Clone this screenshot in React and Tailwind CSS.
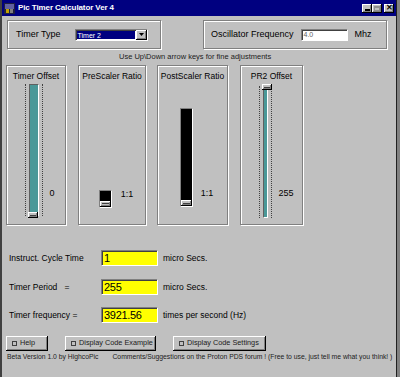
import React from 'react';

const etched = 'border border-[#808080] shadow-[inset_1px_1px_0_#fff,1px_1px_0_#fff]';
const sunken = 'border-t border-l border-[#808080] border-b border-r border-b-white border-r-white shadow-[inset_1px_1px_0_#404040]';
const raised = 'bg-[#c0c0c0] shadow-[inset_-1px_-1px_0_#000,inset_1px_1px_0_#fff,inset_-2px_-2px_0_#808080]';

const TitleButton = ({ children, dim }) => (
    <div className={`w-[10px] h-[9px] ${raised} flex items-center justify-center text-[8px] leading-none font-bold ${dim ? 'text-[#808080]' : 'text-black'}`}>
        {children}
    </div>
);

// vertical trackbar with dotted tick marks and a teal channel
const TealSlider = ({ trackW, thumbTop, height }) => (
    <div className="relative flex gap-[3px]" style={{ height }}>
        <div className="w-px h-full border-l border-dotted border-[#404040]" />
        <div className={`${trackW} h-full bg-[#4a9898] border border-[#606060] border-r-white border-b-white`} />
        <div className="w-px h-full border-l border-dotted border-[#404040]" />
        <div className={`absolute left-[3px] w-[10px] h-[6px] ${raised} flex items-center justify-center ${thumbTop ? 'top-[-2px]' : 'bottom-[-2px]'}`}>
            <div className="w-[6px] h-px bg-[#404040]" />
        </div>
    </div>
);

const BlackSlider = ({ height }) => (
    <div className="w-[13px] bg-black border border-[#808080] border-r-white border-b-white flex flex-col justify-end" style={{ height }}>
        <div className={`h-[6px] ${raised} flex items-center justify-center`}>
            <div className="w-[7px] h-px bg-[#404040]" />
        </div>
    </div>
);

const SliderGroup = ({ title, w, ml, children }) => (
    <div className={`${etched} ${w} ${ml} h-[160px] flex flex-col items-center`}>
        <div className="mt-[5px] text-[8.5px] leading-[10px] whitespace-nowrap">{title}</div>
        {children}
    </div>
);

const ResultRow = ({ label, value, unit, mt }) => (
    <div className={`flex items-center h-[16px] ${mt}`}>
        <div className="w-[92px] ml-[7px] text-[8.5px] whitespace-pre">{label}</div>
        <div className={`w-[57px] h-[16px] bg-[#ffff00] ${sunken} flex items-center pl-[2px] text-[11px] tracking-[-0.3px] leading-none`}>{value}</div>
        <div className="ml-[5px] text-[8.5px]">{unit}</div>
    </div>
);

const Button = ({ label, w, ml }) => (
    <div className={`${w} ${ml} h-[15px] ${raised} flex items-center pl-[6px] text-[7.3px] text-[#202020] whitespace-nowrap`}>
        <span className="w-[5px] h-[5px] border border-[#404040] mr-[3px] shrink-0" />
        {label}
    </div>
);

export default function App() {
    return (
        <div className="w-[400px] h-[377px] bg-[#808080] font-['Liberation_Sans',Arial,sans-serif] text-black overflow-hidden">
            <div className="w-[397px] h-[377px] bg-[#c0c0c0] border-l-2 border-[#404040] border-r border-r-[#202020] flex flex-col">

                {/* Title bar */}
                <div className="h-[16px] bg-[#000080] flex items-center pl-[2px] pr-[2px]">
                    <svg width="11" height="11" viewBox="0 0 11 11">
                        <rect x="0" y="0" width="11" height="11" fill="#202040" />
                        <rect x="1" y="1" width="9" height="5" fill="#6060a0" />
                        <rect x="2" y="6" width="3" height="4" fill="#c0a000" />
                        <rect x="6" y="6" width="3" height="4" fill="#808080" />
                    </svg>
                    <span className="ml-[3px] text-white font-bold text-[8px] tracking-[-0.1px]">Pic Timer Calculator Ver 4</span>
                    <div className="ml-auto flex items-center">
                        <TitleButton><span className="mt-[4px] block w-[5px] h-[1.5px] bg-black" /></TitleButton>
                        <TitleButton dim><span className="block w-[6px] h-[5px] border border-[#909090] border-t-2" /></TitleButton>
                        <div className="ml-[2px]"><TitleButton>✕</TitleButton></div>
                    </div>
                </div>

                {/* Timer type / oscillator */}
                <div className="flex mt-[4px]">
                    <div className={`${etched} ml-[5px] w-[154px] h-[29px] flex items-center`}>
                        <span className="ml-[8px] text-[9px]">Timer Type</span>
                        <div className={`ml-[14px] w-[73px] h-[12px] bg-white ${sunken} flex items-stretch`}>
                            <div className="flex-1 m-px bg-[#000080] text-white text-[7px] leading-[9px] pl-px">Timer 2</div>
                            <div className={`w-[11px] ${raised} flex items-center justify-center`}>
                                <svg width="5" height="3" viewBox="0 0 5 3"><path d="M0 0h5L2.5 3z" fill="#000" /></svg>
                            </div>
                        </div>
                    </div>
                    <div className={`${etched} ml-[42px] w-[184px] h-[29px] flex items-center`}>
                        <span className="ml-[7px] text-[9px]">Oscillator Frequency</span>
                        <div className={`ml-[7px] w-[47px] h-[12px] bg-white ${sunken} text-[7px] leading-[10px] pl-[2px] text-[#606060]`}>4.0</div>
                        <span className="ml-[7px] text-[9px]">Mhz</span>
                    </div>
                </div>

                <div className="h-[16px] flex items-center pl-[117px] text-[7.5px] text-[#202020]">Use Up\Down arrow keys for fine adjustments</div>

                {/* Sliders */}
                <div className="flex h-[160px]">
                    <SliderGroup title="Timer Offset" w="w-[60px]" ml="ml-[4px]">
                        <div className="flex items-end mt-[3px] ml-[8px]">
                            <TealSlider trackW="w-[10px]" height="132px" />
                            <span className="ml-[6px] mb-[16px] text-[9px]">0</span>
                        </div>
                    </SliderGroup>
                    <SliderGroup title="PreScaler Ratio" w="w-[68px]" ml="ml-[12px]">
                        <div className="flex items-end mt-[107px] ml-[8px]">
                            <BlackSlider height="18px" />
                            <span className="ml-[9px] mb-[6px] text-[9px]">1:1</span>
                        </div>
                    </SliderGroup>
                    <SliderGroup title="PostScaler Ratio" w="w-[71px]" ml="ml-[11px]">
                        <div className="flex items-end mt-[27px] ml-[8px]">
                            <BlackSlider height="99px" />
                            <span className="ml-[8px] mb-[7px] text-[9px]">1:1</span>
                        </div>
                    </SliderGroup>
                    <SliderGroup title="PR2 Offset" w="w-[63px]" ml="ml-[12px]">
                        <div className="flex items-end mt-[5px] ml-[10px]">
                            <TealSlider trackW="w-[5px]" thumbTop height="132px" />
                            <span className="ml-[6px] mb-[18px] text-[9px]">255</span>
                        </div>
                    </SliderGroup>
                </div>

                {/* Results */}
                <ResultRow mt="mt-[25px]" label="Instruct. Cycle Time" value="1" unit="micro Secs." />
                <ResultRow mt="mt-[13px]" label="Timer Period   =" value="255" unit="micro Secs." />
                <ResultRow mt="mt-[12px]" label="Timer frequency =" value="3921.56" unit="times per second (Hz)" />

                {/* Buttons */}
                <div className="flex mt-[13px]">
                    <Button label="Help" w="w-[42px]" ml="ml-[4px]" />
                    <Button label="Display Code Example" w="w-[91px]" ml="ml-[17px]" />
                    <Button label="Display Code Settings" w="w-[93px]" ml="ml-[17px]" />
                </div>

                <div className="flex mt-px text-[6.8px] text-[#202020] whitespace-nowrap">
                    <span className="ml-[5px]">Beta Version 1.0 by HighcoPic</span>
                    <span className="ml-[14px]">Comments/Suggestions on the Proton PDS forum ! (Free to use, just tell me what you think! )</span>
                </div>
            </div>
        </div>
    );
}
